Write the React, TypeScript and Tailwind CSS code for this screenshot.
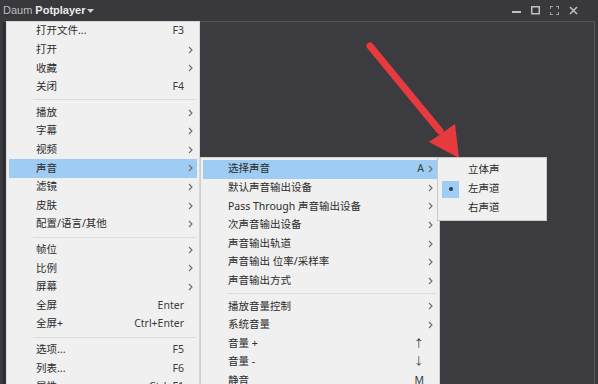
import React from "react";

type Item =
  | { sep: true }
  | { label: string; key?: string; sub?: boolean; active?: boolean; checked?: boolean };

const mainMenu: Item[] = [
  { label: "打开文件...", key: "F3" },
  { label: "打开", sub: true },
  { label: "收藏", sub: true },
  { label: "关闭", key: "F4" },
  { sep: true },
  { label: "播放", sub: true },
  { label: "字幕", sub: true },
  { label: "视频", sub: true },
  { label: "声音", sub: true, active: true },
  { label: "滤镜", sub: true },
  { label: "皮肤", sub: true },
  { label: "配置/语言/其他", sub: true },
  { sep: true },
  { label: "帧位", sub: true },
  { label: "比例", sub: true },
  { label: "屏幕", sub: true },
  { label: "全屏", key: "Enter" },
  { label: "全屏+", key: "Ctrl+Enter" },
  { sep: true },
  { label: "选项...", key: "F5" },
  { label: "列表...", key: "F6" },
  { label: "属性...", key: "Ctrl+F1" },
];

const soundMenu: Item[] = [
  { label: "选择声音", key: "A", sub: true, active: true },
  { label: "默认声音输出设备", sub: true },
  { label: "Pass Through 声音输出设备", sub: true },
  { label: "次声音输出设备", sub: true },
  { label: "声音输出轨道", sub: true },
  { label: "声音输出 位率/采样率", sub: true },
  { label: "声音输出方式", sub: true },
  { sep: true },
  { label: "播放音量控制", sub: true },
  { label: "系统音量", sub: true },
  { label: "音量 +", key: "↑" },
  { label: "音量 -", key: "↓" },
  { label: "静音", key: "M" },
];

const channelMenu: Item[] = [
  { label: "立体声" },
  { label: "左声道", checked: true },
  { label: "右声道" },
];

function Chevron() {
  return (
    <svg width="5" height="8" viewBox="0 0 5 8" className="shrink-0">
      <path d="M1 1 L4 4 L1 7" fill="none" stroke="#6b6b6b" strokeWidth="1.1" />
    </svg>
  );
}

function MenuRows({
  items,
  textLeft,
  keyRight,
}: {
  items: Item[];
  textLeft: string;
  keyRight: string;
}) {
  return (
    <>
      {items.map((it, i) =>
        "sep" in it ? (
          <div key={i} className="h-[7px] flex items-center pl-[26px] pr-[3px]">
            <div className="h-px w-full bg-[#dcdcdc]" />
          </div>
        ) : (
          <div
            key={i}
            className={`h-[18.6px] mx-[2px] flex items-center relative ${
              it.active ? "bg-[#9fccf2]" : ""
            }`}
          >
            {it.checked && (
              <div className="absolute left-[2px] top-[1px] w-[17px] h-[17px] bg-[#9fccf2] flex items-center justify-center">
                <div className="w-[4px] h-[4px] rounded-full bg-[#2f3a48]" />
              </div>
            )}
            <span className={`${textLeft} whitespace-nowrap`}>{it.label}</span>
            <span className="flex-1" />
            {it.key && <span className={`${keyRight} whitespace-nowrap`}>{it.key}</span>}
            {it.sub && (
              <span className="w-[13px] flex justify-center">
                <Chevron />
              </span>
            )}
            {!it.sub && it.key && <span className="w-[13px]" />}
          </div>
        )
      )}
    </>
  );
}

export default function App() {
  return (
    <div
      className="w-[598px] h-[384px] relative overflow-hidden bg-[#39383d] flex flex-col text-[#2b2b2b]"
      style={{ fontFamily: '"Noto Sans", "Noto Sans CJK SC", sans-serif' }}
    >
      {/* title bar */}
      <div className="h-[21px] flex items-center pl-[3px] pr-[20px] shrink-0">
        <span
          className="text-[11px] text-[#bdbdbd] leading-none"
          style={{ fontFamily: '"Liberation Sans", sans-serif' }}
        >
          Daum
        </span>
        <span
          className="ml-[3px] text-[11px] font-bold text-[#ececec] leading-none"
          style={{ fontFamily: '"Liberation Sans", sans-serif' }}
        >
          Potplayer
        </span>
        <svg width="7" height="5" viewBox="0 0 7 5" className="ml-[2px] mt-[1px]">
          <path d="M0 0 H7 L3.5 4 Z" fill="#d0d0d0" />
        </svg>
        <div className="flex-1" />
        <div className="flex items-center gap-[10px]">
          <svg width="9" height="9" viewBox="0 0 9 9">
            <rect x="0" y="5" width="9" height="2" fill="#bfbfbf" />
          </svg>
          <svg width="9" height="9" viewBox="0 0 9 9">
            <rect x="0.75" y="0.75" width="7.5" height="7" fill="none" stroke="#bfbfbf" strokeWidth="1.5" />
          </svg>
          <svg width="9" height="9" viewBox="0 0 9 9">
            <path d="M0 3V0h3M6 0h3v3M9 6v3H6M3 9H0V6" fill="none" stroke="#bfbfbf" strokeWidth="1.5" />
          </svg>
          <svg width="9" height="9" viewBox="0 0 9 9">
            <path d="M1 1L8 8M8 1L1 8" stroke="#bfbfbf" strokeWidth="1.6" />
          </svg>
        </div>
      </div>

      {/* video area */}
      <div className="flex-1 ml-[3px] mr-[3px] border-t border-t-[#56555a] border-l-2 border-l-[#2a292d] border-r border-r-[#5a595e] bg-[#3c3b40]" />

      {/* red arrow */}
      <svg className="absolute left-0 top-0 pointer-events-none" width="598" height="384">
        <line x1="370" y1="46" x2="440" y2="131" stroke="#e63a3f" strokeWidth="7" strokeLinecap="round" />
        <polygon points="429,142 455,124 459,158" fill="#e63a3f" />
      </svg>

      {/* main menu */}
      <div className="absolute left-[6px] top-[21px] w-[194px] h-[380px] bg-[#f0f0f0] border border-[#d6d6d6] text-[10.5px]">
        <MenuRows items={mainMenu} textLeft="ml-[27px]" keyRight="text-[#3a3a3a]" />
      </div>

      {/* sound submenu */}
      <div className="absolute left-[200px] top-[157px] w-[240px] h-[240px] bg-[#f0f0f0] border border-[#cfcfcf] pt-[2px] text-[10.5px]">
        <MenuRows items={soundMenu} textLeft="ml-[25px]" keyRight="text-[#3a3a3a]" />
      </div>

      {/* channel submenu */}
      <div className="absolute left-[437px] top-[157px] w-[110px] h-[64px] bg-[#f0f0f0] border border-[#c8c8c8] pt-[3px] text-[10.5px]">
        <MenuRows items={channelMenu} textLeft="ml-[28px]" keyRight="" />
      </div>
    </div>
  );
}
